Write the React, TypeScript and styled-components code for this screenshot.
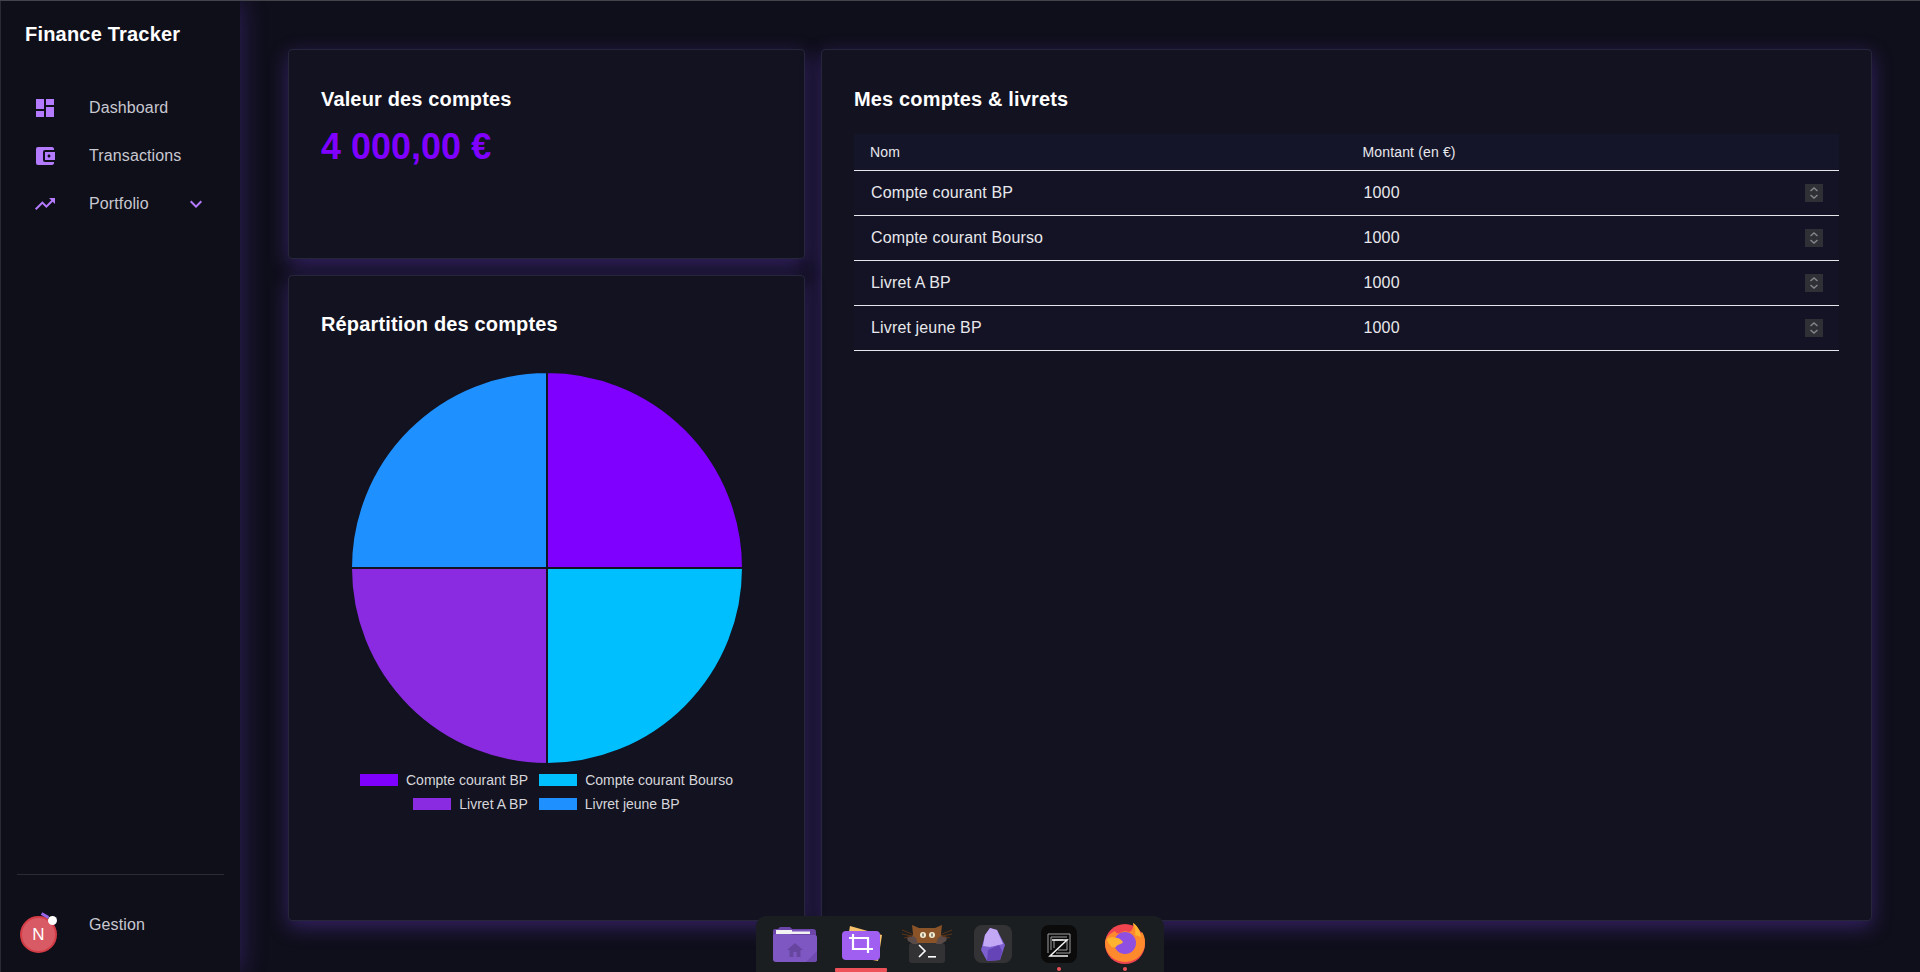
import React from "react";
import styled, { createGlobalStyle } from "styled-components";
import { MdDashboard, MdAccountBalanceWallet, MdTrendingUp, MdExpandMore } from "react-icons/md";

const Global = createGlobalStyle`
  html, body { margin: 0; padding: 0; height: 100%; background: #0f0f1b; overflow: hidden; }
  * { box-sizing: border-box; }
  body { font-family: "Liberation Sans", Arial, sans-serif; color: #fff; }
`;

const Shell = styled.div`
  position: relative;
  display: grid;
  grid-template-columns: 240px 1fr;
  height: 972px;
  width: 1920px;
  border-top: 1px solid #44444c;
  overflow: hidden;
`;

const Sidebar = styled.aside`
  position: relative;
  z-index: 1;
  display: flex;
  flex-direction: column;
  background: #0f0f1a;
  border-left: 1px solid #2a2a33;
  box-shadow: 0 0 24px rgba(105, 60, 200, 0.4);
  padding: 22px 0 0 0;
`;

const Brand = styled.h1`
  margin: 0 0 38px 24px;
  font-size: 20px;
  line-height: 23px;
  font-weight: 700;
  letter-spacing: 0.2px;
  color: #fff;
`;

const NavList = styled.nav`
  display: flex;
  flex-direction: column;
`;

const NavRow = styled.div`
  display: flex;
  align-items: center;
  height: 48px;
  padding-left: 32px;
  color: #c8c8d0;
  font-size: 16px;
  letter-spacing: 0.12px;
  svg { color: #b57bff; flex: none; }
`;

const NavIcon = styled.span`
  display: flex;
  width: 56px;
  flex: none;
  font-size: 24px;
`;

const NavLabel = styled.span`
  flex: 1;
`;

const Caret = styled.span`
  display: flex;
  margin-right: 32px;
  font-size: 24px;
`;

const Spacer = styled.div`
  flex: 1;
`;

const Divider = styled.hr`
  width: 207px;
  margin: 0 0 26px 16px;
  border: 0;
  border-top: 1px solid #2a2a38;
`;

const FootRow = styled.div`
  display: flex;
  align-items: flex-start;
  height: 71px;
  color: #c8c8d0;
  font-size: 16px;
  letter-spacing: 0.12px;
  line-height: 48px;
`;

const Avatar = styled.span`
  position: relative;
  flex: none;
  display: flex;
  align-items: center;
  justify-content: center;
  width: 37px;
  height: 37px;
  margin: 15px 32px 0 19px;
  border-radius: 50%;
  background: #d85a64;
  border: 2px solid #d43c46;
  color: #fff;
  font-size: 17px;
  line-height: 1;
`;

const AvatarDot = styled.i`
  position: absolute;
  top: -2px;
  right: -2px;
  width: 9px;
  height: 9px;
  border-radius: 50%;
  background: #fff;
`;

const AvatarTag = styled.i`
  position: absolute;
  top: -4px;
  right: 6px;
  width: 8px;
  height: 3px;
  background: #9a66e8;
  transform: rotate(30deg);
`;

const Main = styled.main`
  display: grid;
  grid-template-columns: 517px 1fr;
  grid-template-rows: 210px 1fr;
  gap: 16px;
  padding: 48px 48px 51px 48px;
  min-width: 0;
`;

const Card = styled.section<{ $tall?: boolean; $col: number; $top?: number }>`
  grid-column: ${(p) => p.$col};
  grid-row: ${(p) => (p.$tall ? "1 / span 2" : "auto")};
  padding: ${(p) => p.$top ?? 37}px 32px 32px;
  background: #121220;
  border: 1px solid #26263a;
  border-radius: 4px;
  box-shadow: 0 6px 20px rgba(105, 60, 200, 0.42);
  min-width: 0;
`;

const CardTitle = styled.h2`
  margin: 0;
  font-size: 20px;
  line-height: 24px;
  font-weight: 700;
  letter-spacing: 0.15px;
  color: #fff;
`;

const Total = styled.div`
  margin-top: 15px;
  font-size: 36px;
  line-height: 42px;
  font-weight: 700;
  color: #7f00ff;
`;

const ChartBox = styled.div`
  display: flex;
  justify-content: center;
  margin-top: 34px;
`;

const Legend = styled.ul`
  display: flex;
  flex-wrap: wrap;
  justify-content: center;
  gap: 12px 11px;
  width: 420px;
  margin: 8px auto 0;
  padding: 0;
  list-style: none;
`;

const LegendItem = styled.li`
  display: flex;
  align-items: center;
  gap: 8px;
  height: 12px;
  font-size: 14px;
  color: #d6d6da;
`;

const Swatch = styled.i<{ $c: string }>`
  width: 38px;
  height: 12px;
  background: ${(p) => p.$c};
`;

const Table = styled.table`
  width: 100%;
  margin-top: 23px;
  border-collapse: collapse;
  table-layout: fixed;
`;

const HeadCell = styled.th<{ $half?: boolean }>`
  width: ${(p) => (p.$half ? "50%" : "auto")};
  height: 36px;
  padding: 0 16px;
  background: #15152a;
  border-bottom: 1px solid #e6e6ea;
  text-align: left;
  font-weight: 400;
  font-size: 14px;
  letter-spacing: 0.15px;
  font-family: "Liberation Sans", Arial, sans-serif;
  color: #e8e8ec;
`;

const BodyRow = styled.tr`
  height: 45px;
  background: #131325;
`;

const BodyCell = styled.td`
  padding: 1px 16px 0 17px;
  border-bottom: 1px solid #e6e6ea;
  font-size: 16px;
  letter-spacing: 0.15px;
  color: #e8e8ec;
`;

const AmountBox = styled.div`
  display: flex;
  align-items: center;
`;

const Amount = styled.input`
  flex: 1;
  min-width: 0;
  padding: 0;
  border: 0;
  outline: 0;
  background: transparent;
  color: #e8e8ec;
  font-family: "Liberation Sans", Arial, sans-serif;
  font-size: 16px;
  letter-spacing: 0.15px;
  line-height: 18px;
  appearance: textfield;
  &::-webkit-inner-spin-button {
    display: none;
  }
`;

const Stepper = styled.svg`
  flex: none;
  display: block;
  width: 18px;
  height: 18px;
`;

const Dock = styled.div`
  position: absolute;
  z-index: 2;
  left: 756px;
  bottom: 0;
  width: 408px;
  height: 56px;
  display: flex;
  justify-content: center;
  align-items: flex-start;
  gap: 16px;
  padding-top: 4px;
  background: #1b1e21;
  border-radius: 10px 10px 0 0;
`;

const DockSlot = styled.div`
  position: relative;
  width: 50px;
  height: 52px;
  svg { display: block; }
`;

const ActiveBar = styled.i`
  position: absolute;
  left: -1px;
  bottom: 0;
  width: 52px;
  height: 4px;
  background: #ef5158;
  border-radius: 1px;
`;

const Pip = styled.i`
  position: absolute;
  left: 23px;
  bottom: 1px;
  width: 4px;
  height: 4px;
  border-radius: 50%;
  background: #ef5158;
`;

const accounts = ["Compte courant BP", "Compte courant Bourso", "Livret A BP", "Livret jeune BP"];
const colors = ["#7f00ff", "#00bfff", "#8a2be2", "#1e90ff"];

function Pie() {
  const c = 198, r = 196;
  return (
    <svg width={396} height={396} viewBox="0 0 396 396">
      <path d={`M${c} ${c}V${c - r}A${r} ${r} 0 0 1 ${c + r} ${c}Z`} fill={colors[0]} stroke="#121220" strokeWidth="2" />
      <path d={`M${c} ${c}H${c + r}A${r} ${r} 0 0 1 ${c} ${c + r}Z`} fill={colors[1]} stroke="#121220" strokeWidth="2" />
      <path d={`M${c} ${c}V${c + r}A${r} ${r} 0 0 1 ${c - r} ${c}Z`} fill={colors[2]} stroke="#121220" strokeWidth="2" />
      <path d={`M${c} ${c}H${c - r}A${r} ${r} 0 0 1 ${c} ${c - r}Z`} fill={colors[3]} stroke="#121220" strokeWidth="2" />
    </svg>
  );
}

const StepperIcon = () => (
  <Stepper viewBox="0 0 18 18">
    <rect width="18" height="18" fill="#2f2f36" />
    <path d="M5.5 7l3.5-3 3.5 3M5.5 11l3.5 3 3.5-3" fill="none" stroke="#85858c" strokeWidth="1.4" />
  </Stepper>
);

const FolderIcon = () => (
  <svg width="50" height="48" viewBox="0 0 50 48">
    <path d="M3 13V11a2 2 0 0 1 2-2h3l2-2h10l2 2h21a3 3 0 0 1 3 3v4H3Z" fill="#6b46a8" />
    <rect x="6" y="10" width="34" height="4" fill="#f2f2f2" />
    <rect x="22" y="10" width="18" height="1.5" fill="#7c55be" />
    <path d="M3 16a2 2 0 0 1 2-2h15l2 1h23a2 2 0 0 1 2 2v22a3 3 0 0 1-3 3H6a3 3 0 0 1-3-3Z" fill="#7e57c2" />
    <path d="M47 31v8a3 3 0 0 1-3 3H36Z" fill="#6f4bb0" />
    <path d="M25 23l-8 7h2.500v7h4v-5h3v5h4v-7H33Z" fill="#66469f" />
  </svg>
);

const CropIcon = () => (
  <svg width="50" height="48" viewBox="0 0 50 48">
    <path d="M14 6L46 15 42 41 9 35Z" fill="#f5c26b" />
    <rect x="6" y="11" width="38" height="29" rx="4" fill="#a05ff0" />
    <path d="M17 14v15h20M13 18h19v15" fill="none" stroke="#fff" strokeWidth="2.2" />
  </svg>
);

const CatTermIcon = () => (
  <svg width="50" height="48" viewBox="0 0 50 48">
    <rect x="7" y="23" width="36" height="20" rx="3" fill="#323234" />
    <path d="M10 5l7 3h16l7-3-1 9 2 5-6 4H15l-6-4 2-5Z" fill="#8a5328" />
    <path d="M5 18c3-3 7-2 9 0l2 6-5 0-5-3ZM45 18c-3-3-7-2-9 0l-2 6 5 0 5-3Z" fill="#5a4a48" />
    <path d="M0 10l10 4M0 14l10 2M2 18l8-2M50 10l-10 4M50 14l-10 2M48 18l-8-2" stroke="#5b3316" strokeWidth="1" />
    <circle cx="21" cy="15" r="3" fill="#f4ecd0" /><circle cx="30" cy="15" r="3" fill="#f4ecd0" />
    <rect x="20.500" y="13.500" width="1" height="3" fill="#222" /><rect x="29.500" y="13.500" width="1" height="3" fill="#222" />
    <path d="M17 25l6 6-6 6" fill="none" stroke="#fff" strokeWidth="1.6" />
    <rect x="26" y="36" width="8" height="1.6" fill="#fff" />
  </svg>
);

const ObsidianIcon = () => (
  <svg width="50" height="48" viewBox="0 0 50 48">
    <rect x="6" y="5" width="38" height="38" rx="8" fill="#333336" />
    <path d="M22 8l7 2 8 15-5 15-13 1-6-11 4-15Z" fill="#7e5fd0" />
    <path d="M22 8l7 2 6 14-13 3-7-1 2-11Z" fill="#c3a9f5" />
    <path d="M20 30l11-5 3 6-2 9-13 1Z" fill="#6544b8" />
  </svg>
);

const ZedIcon = () => (
  <svg width="50" height="48" viewBox="0 0 50 48">
    <rect x="7" y="5" width="36" height="38" rx="8" fill="#0b0b0b" />
    <path d="M14 33V14h22v3M17 30V17h16M36 17v16H22M33 19v11H24M20 28V20h9" fill="none" stroke="#a0a0a0" strokeWidth="1" />
    <path d="M18 20h15L16 36h18" fill="none" stroke="#f2f2f2" strokeWidth="1.5" />
  </svg>
);

const FirefoxIcon = () => (
  <svg width="50" height="48" viewBox="0 0 50 48">
    <circle cx="25" cy="24" r="20" fill="#f0444f" />
    <path d="M5 23a20 19 0 0 0 40 0c0-5-1-8-3-11-1 1-2 2-3 2 0-5-3-9-6-11 1 5-1 8-4 9-3-1-6-1-9 1-3 1-4 0-5-2-6 3-10 7-10 12Z" fill="#ff8a2e" />
    <path d="M33 3c5 3 8 9 8 14l-6-2c1-4 0-8-2-12Z" fill="#ffb32e" />
    <circle cx="25" cy="23" r="11" fill="#8f4fe0" />
    <path d="M7 19c3-2 7-2 10-1 3 0 5 3 6 4-2 3-6 2-7 5-3 2-8-2-9-8Z" fill="#ffb32e" />
  </svg>
);

export default function App() {
  return (
    <>
      <Global />
      <Shell>
        <Sidebar>
          <Brand>Finance Tracker</Brand>
          <NavList>
            <NavRow><NavIcon><MdDashboard /></NavIcon><NavLabel>Dashboard</NavLabel></NavRow>
            <NavRow><NavIcon><MdAccountBalanceWallet /></NavIcon><NavLabel>Transactions</NavLabel></NavRow>
            <NavRow><NavIcon><MdTrendingUp /></NavIcon><NavLabel>Portfolio</NavLabel><Caret><MdExpandMore /></Caret></NavRow>
          </NavList>
          <Spacer />
          <Divider />
          <FootRow>
            <Avatar>N<AvatarTag /><AvatarDot /></Avatar>
            Gestion
          </FootRow>
        </Sidebar>
        <Main>
          <Card $col={1}>
            <CardTitle>Valeur des comptes</CardTitle>
            <Total>4 000,00 €</Total>
          </Card>
          <Card $col={2} $tall>
            <CardTitle>Mes comptes &amp; livrets</CardTitle>
            <Table>
              <thead>
                <tr>
                  <HeadCell $half>Nom</HeadCell>
                  <HeadCell>Montant (en €)</HeadCell>
                </tr>
              </thead>
              <tbody>
                {accounts.map((a) => (
                  <BodyRow key={a}>
                    <BodyCell>{a}</BodyCell>
                    <BodyCell><AmountBox><Amount type="number" defaultValue={1000} /><StepperIcon /></AmountBox></BodyCell>
                  </BodyRow>
                ))}
              </tbody>
            </Table>
          </Card>
          <Card $col={1} $top={36}>
            <CardTitle>Répartition des comptes</CardTitle>
            <ChartBox><Pie /></ChartBox>
            <Legend>
              {accounts.map((a, i) => (
                <LegendItem key={a}><Swatch $c={colors[i]} />{a}</LegendItem>
              ))}
            </Legend>
          </Card>
        </Main>
        <Dock>
          <DockSlot><FolderIcon /></DockSlot>
          <DockSlot><CropIcon /><ActiveBar /></DockSlot>
          <DockSlot><CatTermIcon /></DockSlot>
          <DockSlot><ObsidianIcon /></DockSlot>
          <DockSlot><ZedIcon /><Pip /></DockSlot>
          <DockSlot><FirefoxIcon /><Pip /></DockSlot>
        </Dock>
      </Shell>
    </>
  );
}
